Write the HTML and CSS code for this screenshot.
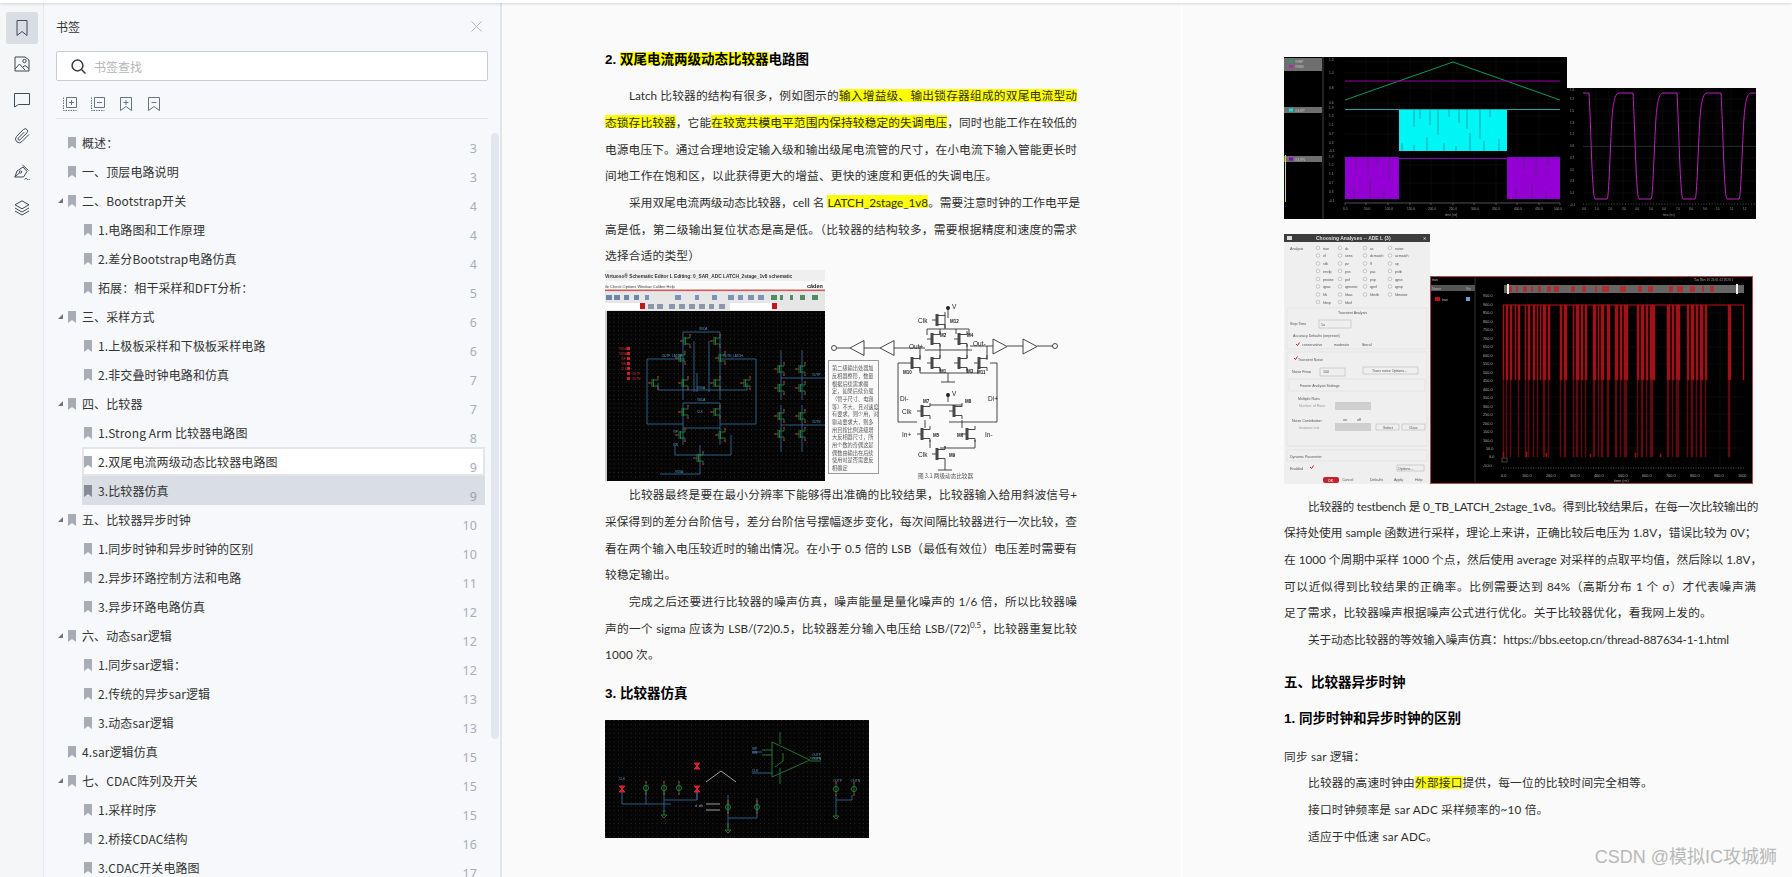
FILE: index.html
```html
<!DOCTYPE html>
<html lang="zh">
<head>
	<meta charset="utf-8">
	<title>书签</title>
	<link rel="stylesheet" href="styles.css">
</head>
<body>
	<svg class="sprite">
		<symbol id="bm" viewBox="0 0 8 12"><path d="M0 0h8v12L4 9 0 12z"/></symbol>
		<g id="mos"><path class="mos-g" d="M-3-4V4M-1.5-4V4M-3 0H-6M-1.5-3H3V-6M-1.5 3H3V6"/><path class="pin" d="M2.3-7h1.4v1.4H2.3zM2.3 5.6h1.4V7H2.3zM-6.7-.7h1.4V.7h-1.4z"/></g>
		<g id="nm"><path class="ink" d="M-8 0H-4M-4-6V6M-2-6V6M-2-4.5H5V-8M-2 4.5H5V8"/><path class="ink-thick" d="M-3-6V6"/></g>
		<g id="src"><circle class="mos-g" r="2.6"/><path class="pin" d="M-.7-7H.7v1.4H-.7zM-.7 5.6H.7V7H-.7z"/><path class="mos-g" d="M0-6V6"/></g>
	</svg>

	<div class="topbar"></div>
	<div class="app">
		<!-- left icon rail -->
		<nav class="rail">
			<a class="rail-btn active"><svg viewBox="0 0 16 16"><path d="M3 .5h10v15L8 11.5 3 15.5z"/></svg></a>
			<a class="rail-btn"><svg viewBox="0 0 16 16"><path d="M1 1h10l4 3v11H1zM1 13l4.500-5 5.500 6M9 11l2-1.500 4 3"/><circle cx="10.500" cy="5" r="1.700"/></svg></a>
			<a class="rail-btn"><svg viewBox="0 0 16 16"><path d="M.5 1.500h15v11H4.500l-4 2.500z"/></svg></a>
			<a class="rail-btn"><svg viewBox="0 0 16 16"><path d="M15 6.500 8 13.500a3.600 3.600 0 0 1-5.500-5l7-7a2.400 2.400 0 0 1 3.400 3.400L6 11.800a1.200 1.200 0 0 1-1.700-1.700l6-6"/></svg></a>
			<a class="rail-btn"><svg viewBox="0 0 16 16"><path d="M3 7l6-4 4 4.500-3.500 5.500H.8zM8.500 1l6 5.500M.8 13 5.500 8.800M10.500 15.500c1-1.500 2-1.500 3 0s1.500.5 2-.5"/><circle cx="6.500" cy="8" r="1.200"/></svg></a>
			<a class="rail-btn"><svg viewBox="0 0 16 16"><path d="M8 .8l7 4-7 4-7-4zM1 8l7 4 7-4M1 11l7 4 7-4"/></svg></a>
		</nav>

		<!-- bookmark panel -->
		<aside class="panel">
			<div class="panel-head">
				<span class="panel-title">书签</span>
				<svg class="close" viewBox="0 0 11 11"><path d="M.5.500l10 10M10.500.500l-10 10"/></svg>
			</div>
			<div class="search">
				<svg class="search-ico" viewBox="0 0 15 15"><circle cx="6.500" cy="6.500" r="5.400"/><path d="M10.500 10.500l4 4"/></svg>
				<span class="search-text">书签查找</span>
			</div>
			<div class="tools">
				<svg class="tool" viewBox="0 0 14 14"><path class="dash" d="M.5.500v13h13"/><path d="M3.500.500h10v10h-10zM8.500 3v5M6 5.500h5"/></svg>
				<svg class="tool" viewBox="0 0 14 14"><path class="dash" d="M.5.500v13h13"/><path d="M3.500.500h10v10h-10zM6 5.500h5"/></svg>
				<svg class="tool" viewBox="0 0 14 14"><path d="M1.500.500h11v13l-5.500-4-5.500 4zM7 3v5M4.500 5.500h5"/></svg>
				<svg class="tool" viewBox="0 0 14 14"><path d="M1.500.500h11v13l-5.500-4-5.500 4zM4.500 5.500h5"/></svg>
			</div>
			<div class="tree">
				<div class="row"><i class="twisty"></i><svg class="bm"><use href="#bm"/></svg><span class="label">概述：</span><span class="pg">3</span></div>
				<div class="row"><i class="twisty"></i><svg class="bm"><use href="#bm"/></svg><span class="label">一、顶层电路说明</span><span class="pg">3</span></div>
				<div class="row"><i class="twisty open"></i><svg class="bm"><use href="#bm"/></svg><span class="label">二、Bootstrap开关</span><span class="pg">4</span></div>
				<div class="row sub"><svg class="bm"><use href="#bm"/></svg><span class="label">1.电路图和工作原理</span><span class="pg">4</span></div>
				<div class="row sub"><svg class="bm"><use href="#bm"/></svg><span class="label">2.差分Bootstrap电路仿真</span><span class="pg">4</span></div>
				<div class="row sub"><svg class="bm"><use href="#bm"/></svg><span class="label">拓展：相干采样和DFT分析：</span><span class="pg">5</span></div>
				<div class="row"><i class="twisty open"></i><svg class="bm"><use href="#bm"/></svg><span class="label">三、采样方式</span><span class="pg">6</span></div>
				<div class="row sub"><svg class="bm"><use href="#bm"/></svg><span class="label">1.上极板采样和下极板采样电路</span><span class="pg">6</span></div>
				<div class="row sub"><svg class="bm"><use href="#bm"/></svg><span class="label">2.非交叠时钟电路和仿真</span><span class="pg">7</span></div>
				<div class="row"><i class="twisty open"></i><svg class="bm"><use href="#bm"/></svg><span class="label">四、比较器</span><span class="pg">7</span></div>
				<div class="row sub"><svg class="bm"><use href="#bm"/></svg><span class="label">1.Strong Arm 比较器电路图</span><span class="pg">8</span></div>
				<div class="row sub hover"><svg class="bm"><use href="#bm"/></svg><span class="label">2.双尾电流两级动态比较器电路图</span><span class="pg">9</span></div>
				<div class="row sub selected"><svg class="bm"><use href="#bm"/></svg><span class="label">3.比较器仿真</span><span class="pg">9</span></div>
				<div class="row"><i class="twisty open"></i><svg class="bm"><use href="#bm"/></svg><span class="label">五、比较器异步时钟</span><span class="pg">10</span></div>
				<div class="row sub"><svg class="bm"><use href="#bm"/></svg><span class="label">1.同步时钟和异步时钟的区别</span><span class="pg">10</span></div>
				<div class="row sub"><svg class="bm"><use href="#bm"/></svg><span class="label">2.异步环路控制方法和电路</span><span class="pg">11</span></div>
				<div class="row sub"><svg class="bm"><use href="#bm"/></svg><span class="label">3.异步环路电路仿真</span><span class="pg">12</span></div>
				<div class="row"><i class="twisty open"></i><svg class="bm"><use href="#bm"/></svg><span class="label">六、动态sar逻辑</span><span class="pg">12</span></div>
				<div class="row sub"><svg class="bm"><use href="#bm"/></svg><span class="label">1.同步sar逻辑：</span><span class="pg">12</span></div>
				<div class="row sub"><svg class="bm"><use href="#bm"/></svg><span class="label">2.传统的异步sar逻辑</span><span class="pg">13</span></div>
				<div class="row sub"><svg class="bm"><use href="#bm"/></svg><span class="label">3.动态sar逻辑</span><span class="pg">13</span></div>
				<div class="row"><i class="twisty"></i><svg class="bm"><use href="#bm"/></svg><span class="label">4.sar逻辑仿真</span><span class="pg">15</span></div>
				<div class="row"><i class="twisty open"></i><svg class="bm"><use href="#bm"/></svg><span class="label">七、CDAC阵列及开关</span><span class="pg">15</span></div>
				<div class="row sub"><svg class="bm"><use href="#bm"/></svg><span class="label">1.采样时序</span><span class="pg">15</span></div>
				<div class="row sub"><svg class="bm"><use href="#bm"/></svg><span class="label">2.桥接CDAC结构</span><span class="pg">16</span></div>
				<div class="row sub"><svg class="bm"><use href="#bm"/></svg><span class="label">3.CDAC开关电路图</span><span class="pg">17</span></div>
				<div class="scrollbar"></div>
			</div>
		</aside>

		<!-- document pages -->
		<main class="reader">
			<section class="page page-left">
				<h2 class="head first"><span class="num">2. </span><mark>双尾电流两级动态比较器</mark>电路图</h2>
				<p class="ln ind">Latch 比较器的结构有很多，例如图示的<mark>输入增益级、输出锁存器组成的双尾电流型动</mark></p>
				<p class="ln"><mark>态锁存比较器</mark>，它能<mark>在较宽共模电平范围内保持较稳定的失调电压</mark>，同时也能工作在较低的</p>
				<p class="ln">电源电压下。通过合理地设定输入级和输出级尾电流管的尺寸，在小电流下输入管能更长时</p>
				<p class="ln end">间地工作在饱和区，以此获得更大的增益、更快的速度和更低的失调电压。</p>
				<p class="ln ind">采用双尾电流两级动态比较器，cell 名 <mark>LATCH_2stage_1v8</mark>。需要注意时钟的工作电平是</p>
				<p class="ln">高是低，第二级输出复位状态是高是低。（比较器的结构较多，需要根据精度和速度的需求</p>
				<p class="ln end">选择合适的类型）</p>

				<div class="fig-row fig-schem">
					<svg class="pic blur" width="220" height="211" viewBox="0 0 220 211">
						<defs>
							<pattern id="dotsA" width="4.300" height="4.300" patternUnits="userSpaceOnUse"><rect width=".7" height=".7" fill="#4a4a4a"/></pattern>
							<pattern id="dotsC" width="4.300" height="4.300" patternUnits="userSpaceOnUse"><rect width=".7" height=".7" fill="#444"/></pattern>
						</defs>
						<rect width="220" height="211" fill="#e6e6e6"/>
						<rect width="220" height="11" fill="#efefef"/>
						<text class="t bold" font-size="4.800" x="0" y="7.500" fill="#333">Virtuoso® Schematic Editor L Editing: 0_SAR_ADC LATCH_2stage_1v8 schematic</text>
						<rect y="11" width="220" height="9" fill="#fafafa"/>
						<text class="t" font-size="4" x="0" y="17.500" fill="#444">ile   Check   Options   Window   Calibre   Help</text>
						<text class="t bold" font-size="5.500" x="202" y="17.500" fill="#222">cāden</text>
						<rect y="19.500" width="220" height="1.600" fill="#cf5a5a"/>
						<path d="M1 25h6v5H1zM9 25h6v5H9zM19 25h5v5h-5zM29 25h5v5h-5z" fill="#6f86a8"/>
						<path d="M40 25h4v5h-4zM70 25h6v5h-6zM90 25h4v5h-4zM107 25h5v5h-5zM123 25h6v5h-6zM133 25h5v5h-5zM143 25h6v5h-6zM153 25h6v5h-6z" fill="#7d93b6"/>
						<path d="M166 25h6v5h-6zM175 25h3v5h-3zM185 25h3v5h-3zM195 25h5v5h-5zM207 25h6v5h-6z" fill="#4b8f62"/>
						<rect y="33" width="36" height="7" fill="#fff"/>
						<rect x="125" y="33" width="42" height="7" fill="#fff"/>
						<path d="M35 33h5v6h-5zM167 33h5v6h-5z" fill="#c4161c"/>
						<path d="M43 34h6v5h-6zM52 34h6v5h-6zM64 34h6v5h-6zM74 34h6v5h-6zM84 34h6v5h-6zM94 34h6v5h-6zM104 34h5v5h-5zM114 34h6v5h-6z" fill="#8a96aa"/>
						<rect y="41" width="220" height="170" fill="#050505"/>
						<rect y="41" width="2" height="170" fill="#cfcfcf"/>
						<rect x="3" y="42" width="217" height="169" fill="url(#dotsA)"/>
						<g class="wire">
							<path d="M78 62H115M78 62V130M115 62V130M42 89H80M115 89H151M42 89V154H78M151 89V154H115M53 120H142M53 113V120M142 113V120M78 133H115M78 133V175M115 133V175M78 158H115M92 103V122M89 71V122M104 71V122M70 175V185H126V165M95 175V204H55"/>
							<path d="M176 80V130M197 80V130M176 135V182M197 135V182M176 108H197M176 155H197M197 108H220M197 155H220"/>
						</g>
						<g>
							<use href="#mos" x="82" y="71"/><use href="#mos" x="112" y="71"/><use href="#mos" x="77" y="88"/><use href="#mos" x="117" y="88"/>
							<use href="#mos" x="50" y="113"/><use href="#mos" x="80" y="113"/><use href="#mos" x="112" y="113"/><use href="#mos" x="142" y="113"/>
							<use href="#mos" x="80" y="142"/><use href="#mos" x="112" y="142"/><use href="#mos" x="77" y="165"/><use href="#mos" x="117" y="165"/>
							<use href="#mos" x="95" y="188"/><use href="#mos" x="176" y="99"/><use href="#mos" x="197" y="99"/><use href="#mos" x="176" y="118"/>
							<use href="#mos" x="197" y="118"/><use href="#mos" x="176" y="146"/><use href="#mos" x="197" y="146"/><use href="#mos" x="176" y="164"/><use href="#mos" x="197" y="164"/>
						</g>
						<path class="pin" d="M22 77h3v3h-3zM22 82h3v3h-3zM22 87h3v3h-3zM22 92h3v3h-3zM22 97h3v3h-3zM22 102h3v3h-3zM22 107h3v3h-3z"/>
						<g class="t" font-size="3" fill="#c33">
							<text x="14" y="79.500">VDDA</text><text x="14" y="84.500">VSSA</text><text x="16" y="89.500">VIP</text><text x="16" y="94.500">VIN</text><text x="16" y="99.500">CLK</text><text x="27" y="104.500">OUTP</text><text x="27" y="109.500">OUTN</text>
						</g>
						<g class="t" font-size="3" fill="#5b9ac8">
							<text x="94" y="60">VDDA</text><text x="57" y="87">OUTP_LATCH</text><text x="118" y="87">OUTN_LATCH</text><text x="92" y="119">VSSA</text><text x="92" y="131">VDDA</text><text x="92" y="143">CLK</text><text x="68" y="163">VIP</text><text x="68" y="176">VIN</text><text x="70" y="203">VSSA</text><text x="207" y="106">OUTP</text><text x="207" y="153">OUTN</text>
						</g>
					</svg>
					<svg class="pic blur" width="260" height="211" viewBox="0 0 260 211">
						<g class="ink">
							<circle cx="9" cy="78" r="2.500"/>
							<path d="M12 78H25M39 78H55M69 78H100M145 76H168M182 76H198M212 76H228"/>
							<path d="M25 78l14-7.500v15zM55 78l14-7.500v15zM168 69v15l14-7.500zM198 69v15l14-7.500z"/>
							<circle cx="230" cy="76" r="2.500"/>
							<path d="M123 38V48M120 45V56M120 56V59M102 59H144M102 59V65M144 59V65M115 64V59M131 59V64M115 74V88M142 74V88M100 80H147M115 98V103M142 98V103M95 97V103H153V97M95 90V76M162 90V76M123 103V112M116 112H130"/>
							<path d="M73 93H82M73 93V152H92M172 93H165M172 93V152H124M100 150V158M137 150V158M105 135H137M123 132V128M105 170V178M150 170V178H115M120 178V176M120 192V200M113 200H127M123 128V125"/>
						</g>
						<circle cx="123" cy="38" r="2" fill="#222"/><circle cx="123" cy="125" r="2" fill="#222"/>
						<g><use href="#nm" x="115" y="50"/><use href="#nm" x="110" y="69"/><use href="#nm" x="137" y="69"/><use href="#nm" x="110" y="93"/><use href="#nm" x="137" y="93"/><use href="#nm" x="90" y="93"/><use href="#nm" x="157" y="93"/><use href="#nm" x="100" y="141"/><use href="#nm" x="132" y="141"/><use href="#nm" x="100" y="164"/><use href="#nm" x="145" y="164"/><use href="#nm" x="115" y="184"/></g>
						<g class="t" font-size="6.500" fill="#222">
							<text x="93" y="53">Clk</text><text x="84" y="79">Out+</text><text x="148" y="76">Out-</text><text x="75" y="131">Di-</text><text x="163" y="131">Di+</text><text x="77" y="144">Clk</text><text x="77" y="167">In+</text><text x="160" y="167">In-</text><text x="93" y="187">Clk</text><text x="127" y="39">V</text><text x="127" y="126">V</text>
						</g>
						<g class="t bold" font-size="4.500" fill="#222">
							<text x="125" y="53">M12</text><text x="115" y="67">M2</text><text x="142" y="67">M4</text><text x="115" y="103">M1</text><text x="142" y="103">M3</text><text x="78" y="104">M10</text><text x="152" y="104">M11</text><text x="98" y="133">M7</text><text x="140" y="133">M8</text><text x="108" y="167">M5</text><text x="132" y="167">M6</text><text x="124" y="187">M9</text>
						</g>
						<rect class="note-box" x="3.500" y="90.500" width="50" height="113"/>
						<g class="note">
							<text x="7" y="100">第二级输出处器加</text><text x="7" y="108">反相器整形，数量</text><text x="7" y="116">根据后续需求确</text><text x="7" y="123">定，如果后续负载</text><text x="7" y="131">（管子尺寸、电容</text><text x="7" y="139">等）不大，且对速度</text><text x="7" y="146">有要求，则少用，对</text><text x="7" y="154">驱动要求大，则多</text><text x="7" y="162">用且按比例递级增</text><text x="7" y="169">大反相器尺寸，所</text><text x="7" y="177">用个数的奇偶这是</text><text x="7" y="185">偶数由输出在后续</text><text x="7" y="192">使用时是否需要反</text><text x="7" y="200">相确定</text>
						</g>
						<text class="note cap" x="93" y="208">图 3.1 两级动态比较器</text>
					</svg>
				</div>

				<p class="ln ind">比较器最终是要在最小分辨率下能够得出准确的比较结果，比较器输入给用斜波信号+</p>
				<p class="ln">采保得到的差分台阶信号，差分台阶信号摆幅逐步变化，每次间隔比较器进行一次比较，查</p>
				<p class="ln">看在两个输入电压较近时的输出情况。在小于 0.5 倍的 LSB（最低有效位）电压差时需要有</p>
				<p class="ln end">较稳定输出。</p>
				<p class="ln ind">完成之后还要进行比较器的噪声仿真，噪声能量是量化噪声的 1/6 倍，所以比较器噪</p>
				<p class="ln">声的一个 sigma 应该为 LSB/(72)0.5，比较器差分输入电压给 LSB/(72)<sup>0.5</sup>，比较器重复比较</p>
				<p class="ln end">1000 次。</p>
				<h2 class="head h-fig"><span class="num">3. </span>比较器仿真</h2>

				<svg class="pic blur" width="264" height="118" viewBox="0 0 264 118">
					<rect width="264" height="118" fill="#050505"/>
					<rect width="264" height="118" fill="url(#dotsC)"/>
					<g class="wire">
						<path d="M17 69V84H66M41 71V84M59 71V80H92V71M59 80V84M92 80V71M123 75V98H152V78M247 75V80H231M231 75V92M59 84V92M123 98V108"/>
						<path d="M147 32H157M147 53H167"/>
					</g>
					<path class="mos-g" d="M167 22 205 40 167 57zM157 30H167M157 35H167M205 38H216M205 41H216M170 47l8-6V33M175 12V24M175 48V64M59 90V95M123 103V110M231 92V96M56 95h6l-3 3zM120 110h6l-3 3zM228 96h6l-3 3z"/>
					<path class="ink-w" d="M101 62 116 51 131 62"/>
					<path class="ink-w" d="M101 84H115M101 90H115"/>
					<g><use href="#src" x="41" y="68"/><use href="#src" x="59" y="68"/><use href="#src" x="74" y="68"/><use href="#src" x="123" y="87"/><use href="#src" x="152" y="87"/><use href="#src" x="231" y="69"/><use href="#src" x="249" y="69"/></g>
					<path d="M14 66h6l-6 6h6zM89 43h6l-6 6h6zM89 66h6l-6 6h6z" fill="#d6202a" stroke="#d6202a" stroke-width="1"/>
					<g class="t" font-size="3.200" fill="#5b9ac8"><text x="147" y="30">VIP</text><text x="147" y="34">VIN</text><text x="147" y="52">CLK</text><text x="207" y="36">OUTP</text><text x="207" y="40">OUTN</text><text x="14" y="60">CLK</text><text x="228" y="62">OUTP</text><text x="246" y="62">OUTN</text></g>
					<text class="t" font-size="3" x="90" y="87" fill="#bbb">sl_vth</text>
				</svg>
			</section>

			<section class="page page-right">
				<div class="fig-row">
					<svg class="pic blur" width="283" height="162" viewBox="0 0 283 162">
						<rect width="283" height="162" fill="#000"/>
						<path d="M39 0V162" stroke="#444"/>
						<path d="M0 1h38v13H0zM0 50h38v6H0zM0 99h38v6H0z" fill="#6e6e6e"/>
						<path d="M5 3h4v3H5z" fill="#1fa463"/><path d="M5 8h4v3H5z" fill="#c020c0"/><path d="M5 51.500h4v3H5z" fill="#00e5e5"/><path d="M5 100.500h4v3H5z" fill="#8a00d0"/>
						<g class="t" font-size="3.200" fill="#c9c9c9"><text x="11" y="5.500">/VINP</text><text x="11" y="10.500">/VINN</text><text x="11" y="54.500">/OUTP</text><text x="11" y="103.500">/OUTN</text></g>
						<rect x="1" y="98" width="1" height="47" fill="#d8d820"/>
						<path class="grid" d="M61 5H276M61 16H276M61 31H276M61 46H276M61 59H276M61 77H276M61 108H276M61 126H276M82 0V146M104 0V146M126 0V146M147 0V146M169 0V146M190 0V146M212 0V146M233 0V146M255 0V146"/>
						<path d="M61 43 169 5 276 43" fill="none" stroke="#0b9b61" stroke-width="1"/>
						<path d="M61 24H276" stroke="#a000a0" stroke-width="1"/>
						<rect x="115" y="52" width="108" height="42" fill="#00f5f5"/>
						<path d="M61 52.500H276" stroke="#14a8a8"/>
						<path d="M130 52V70M136 52V62M146 52V68M154 52V78M165 52V60M175 52V66M183 52V72M196 52V82M206 52V60M118 94V86M130 94V88M143 94V80M160 94V86M172 94V89M186 94V76M200 94V84M215 94V82" stroke="#22888c" stroke-width=".7"/>
						<path d="M61 100h54v42H61zM223 100h53v42h-53z" fill="#9400d3"/>
						<path d="M61 101.500H276" stroke="#8400c0" stroke-width="1"/>
						<path d="M72 100V112M84 100V116M93 100V108M105 100V122M240 100V112M252 100V118M264 100V108M70 142V130M86 142V122M100 142V132M232 142V132M248 142V128M262 142V134" stroke="#4a2a70" stroke-width=".7"/>
						<path d="M61 146H276M61 146v2M82 146v2M104 146v2M126 146v2M147 146v2M169 146v2M190 146v2M212 146v2M233 146v2M255 146v2M276 146v2" stroke="#888" stroke-width=".6"/>
						<g class="t" font-size="3.200" fill="#9a9a9a">
							<text x="45" y="3.500">1.3</text><text x="45" y="17">1.0</text><text x="45" y="32">0.8</text><text x="45" y="47">0.6</text>
							<text x="45" y="52">1.9</text><text x="45" y="60">1.5</text><text x="45" y="69">1.1</text><text x="45" y="78">0.7</text><text x="45" y="87">0.3</text><text x="45" y="95">-0.1</text>
							<text x="45" y="101">1.9</text><text x="45" y="109">1.5</text><text x="45" y="118">1.1</text><text x="45" y="127">0.7</text><text x="45" y="136">0.3</text><text x="45" y="145">-0.1</text>
							<text x="59" y="153">0.0</text><text x="80" y="153">50.0</text><text x="101" y="153">100.0</text><text x="123" y="153">150.0</text><text x="144" y="153">200.0</text><text x="165" y="153">250.0</text><text x="187" y="153">300.0</text><text x="208" y="153">350.0</text><text x="230" y="153">400.0</text><text x="251" y="153">450.0</text><text x="270" y="153">500.0</text>
							<text x="161" y="159">time (ns)</text>
						</g>
					</svg>
					<svg class="pic blur lower" width="189" height="131" viewBox="0 0 189 131">
						<rect width="189" height="131" fill="#000"/>
						<path class="grid" d="M16 11H189M16 23H189M16 35H189M16 46H189M16 58H189M16 70H189M16 82H189M16 93H189M16 105H189M29 0V116M42 0V116M56 0V116M69 0V116M83 0V116M96 0V116M110 0V116M123 0V116M137 0V116M150 0V116M164 0V116"/>
						<path d="M16 58.500H189" stroke="#1f3d2a" stroke-width=".7"/>
						<path d="M16 5H22C24 40 25 108 28 111H40C42 111 43 60 45 30C46 15 48 5 52 5H66C68 40 69 108 72 111H84C86 111 87 60 89 30C90 15 92 5 96 5H110C112 40 113 108 116 111H128C130 111 131 60 133 30C134 15 136 5 140 5H154C156 40 157 108 160 111H172C174 111 175 60 177 30C178 15 180 5 184 5H189" fill="none" stroke="#c020c0" stroke-width="1"/>
						<path d="M16 116H189" stroke="#888" stroke-width=".6" stroke-dasharray="1 1.800"/>
						<g class="t" font-size="3" fill="#9a9a9a">
							<text x="3" y="3">1.9</text><text x="3" y="12">1.7</text><text x="3" y="24">1.5</text><text x="3" y="36">1.3</text><text x="3" y="47">1.1</text><text x="3" y="59">0.9</text><text x="3" y="71">0.7</text><text x="3" y="83">0.5</text><text x="3" y="94">0.3</text><text x="3" y="106">0.1</text><text x="3" y="118">-0.1</text>
							<text x="15" y="122">0.6</text><text x="28" y="122">1.0</text><text x="41" y="122">2.0</text><text x="55" y="122">3.0</text><text x="68" y="122">4.0</text><text x="82" y="122">5.0</text><text x="95" y="122">6.0</text><text x="109" y="122">7.0</text><text x="122" y="122">8.0</text><text x="136" y="122">9.0</text><text x="149" y="122">10</text><text x="163" y="122">11</text><text x="176" y="122">12</text>
							<text x="96" y="128">time (ns)</text>
						</g>
					</svg>
				</div>

				<div class="fig-row gap-top">
					<svg class="pic blur" width="146" height="250" viewBox="0 0 146 250">
						<rect width="146" height="250" fill="#efefef"/>
						<rect width="146" height="8" fill="#3c3c3c"/>
						<rect x="3" y="2" width="5" height="4" fill="#ddd"/>
						<text class="t bold" font-size="5" x="32" y="5.800" fill="#ddd">Choosing Analyses -- ADE L (3)</text>
						<text class="t bold" font-size="4" x="139" y="5.800" fill="#ddd">✕</text>
						<g class="radios">
							<circle cx="34" cy="14" r="1.800" fill="#c0232b"/>
							<circle cx="34" cy="21.500" r="1.800"/><circle cx="34" cy="29.500" r="1.800"/><circle cx="34" cy="37" r="1.800"/><circle cx="34" cy="45" r="1.800"/><circle cx="34" cy="52.500" r="1.800"/><circle cx="34" cy="60.500" r="1.800"/><circle cx="34" cy="68" r="1.800"/>
							<circle cx="56" cy="14" r="1.800"/><circle cx="56" cy="21.500" r="1.800"/><circle cx="56" cy="29.500" r="1.800"/><circle cx="56" cy="37" r="1.800"/><circle cx="56" cy="45" r="1.800"/><circle cx="56" cy="52.500" r="1.800"/><circle cx="56" cy="60.500" r="1.800"/><circle cx="56" cy="68" r="1.800"/>
							<circle cx="81" cy="14" r="1.800"/><circle cx="81" cy="21.500" r="1.800"/><circle cx="81" cy="29.500" r="1.800"/><circle cx="81" cy="37" r="1.800"/><circle cx="81" cy="45" r="1.800"/><circle cx="81" cy="52.500" r="1.800"/><circle cx="81" cy="60.500" r="1.800"/>
							<circle cx="106" cy="14" r="1.800"/><circle cx="106" cy="21.500" r="1.800"/><circle cx="106" cy="29.500" r="1.800"/><circle cx="106" cy="37" r="1.800"/><circle cx="106" cy="45" r="1.800"/><circle cx="106" cy="52.500" r="1.800"/><circle cx="106" cy="60.500" r="1.800"/>
						</g>
						<g class="dlg">
							<text x="6" y="15.500">Analysis</text>
							<text x="39" y="15.500">tran</text><text x="39" y="23">xf</text><text x="39" y="31">stb</text><text x="39" y="38.500">envlp</text><text x="39" y="46.500">pnoise</text><text x="39" y="54">qpac</text><text x="39" y="62">hb</text><text x="39" y="69.500">hbsp</text>
							<text x="61" y="15.500">dc</text><text x="61" y="23">sens</text><text x="61" y="31">pz</text><text x="61" y="38.500">pss</text><text x="61" y="46.500">pxf</text><text x="61" y="54">qpnoise</text><text x="61" y="62">hbac</text><text x="61" y="69.500">hbxf</text>
							<text x="86" y="15.500">ac</text><text x="86" y="23">dcmatch</text><text x="86" y="31">lf</text><text x="86" y="38.500">pac</text><text x="86" y="46.500">psp</text><text x="86" y="54">qpxf</text><text x="86" y="62">hbstb</text>
							<text x="111" y="15.500">noise</text><text x="111" y="23">acmatch</text><text x="111" y="31">sp</text><text x="111" y="38.500">pstb</text><text x="111" y="46.500">qpss</text><text x="111" y="54">qpsp</text><text x="111" y="62">hbnoise</text>
							<text x="54" y="80">Transient Analysis</text>
							<text x="6" y="91">Stop Time</text><text x="37" y="91.500">1u</text>
							<text x="9" y="103">Accuracy Defaults (errpreset)</text>
							<text x="18" y="112">conservative</text><text x="50" y="112">moderate</text><text x="78" y="112">liberal</text>
							<text x="14" y="127">Transient Noise</text>
							<text x="8" y="139">Noise Fmax</text><text x="39" y="139">100</text>
							<text x="88" y="138">Trans noise Options...</text>
							<text x="16" y="152.500">Fourier Analysis Settings</text>
							<text x="14" y="166">Multiple Runs</text>
							<text x="15" y="172.500" fill="#999">Number of Runs</text>
							<text x="8" y="188">Noise Contribution</text><text x="59" y="187">on</text><text x="73" y="187">off</text>
							<text x="15" y="194.500" fill="#999">Instance List</text>
							<text x="99" y="194.500">Select</text><text x="125" y="194.500">Clear</text>
							<text x="6" y="224">Dynamic Parameter</text>
							<text x="6" y="236">Enabled</text>
							<text x="114" y="235.500">Options...</text>
							<text x="58" y="247">Cancel</text><text x="86" y="247">Defaults</text><text x="110" y="247">Apply</text><text x="131" y="247">Help</text>
						</g>
						<path class="box" d="M3 74H143V115H3zM3 118H143V212H3zM5 145H141V157H5zM3 216H143V227H3z"/>
						<rect class="field" x="35" y="86" width="32" height="8"/>
						<rect class="field" x="36" y="134" width="25" height="8"/>
						<rect class="field" x="79" y="133" width="55" height="7"/>
						<rect class="field off" x="51" y="168" width="36" height="8"/>
						<rect class="field off" x="51" y="189" width="36" height="8"/>
						<rect class="field" x="92" y="190" width="23" height="6"/><rect class="field" x="118" y="190" width="23" height="6"/>
						<rect class="field" x="113" y="231" width="27" height="6"/>
						<path d="M12 110l1.500 1.500 2-3M10 124l1.500 1.500 2-3M26 233l1.500 1.500 2-3" fill="none" stroke="#c0232b" stroke-width="1"/>
						<rect x="39" y="243" width="16" height="6" rx="2" fill="#c0232b"/>
						<text class="t bold" font-size="3.400" x="44" y="247.500" fill="#f5d0d0">OK</text>
					</svg>
					<svg class="pic blur raised" width="323" height="208" viewBox="0 0 323 208">
						<rect x=".5" y=".5" width="322" height="207" fill="#000" stroke="#a94b50"/>
						<path d="M45 1V207" stroke="#333"/>
						<rect x="1" y="9" width="44" height="6" fill="#555"/>
						<g class="t" font-size="3.400" fill="#bbb"><text x="2" y="5">tran</text><text x="2" y="13.500">Name</text><text x="36" y="13.500">Vis</text><text x="12" y="25">tran</text><text x="264" y="5" class="serif">Tue Nov 10 23:01:12 2020  1</text></g>
						<rect x="5" y="21" width="5" height="4" fill="#c01018"/>
						<path d="M36 21h4v4h-4z" fill="#6f9ed0"/>
						<rect x="74" y="9" width="240" height="8" fill="#666"/>
						<path d="M79 10h3v6h-3zM86 10h2v6h-2zM93 10h4v6h-4zM101 10h2v6h-2zM108 10h3v6h-3zM117 10h4v6h-4zM124 10h5v6h-5zM141 10h4v6h-4zM152 10h4v6h-4zM165 10h2v6h-2zM172 10h7v6h-7zM190 10h6v6h-6zM208 10h4v6h-4zM218 10h5v6h-5zM239 10h4v6h-4zM247 10h6v6h-6zM260 10h5v6h-5zM272 10h2v6h-2zM280 10h4v6h-4z" fill="#b03030"/>
						<path d="M77 8h2v10h-2zM306 8h2v10h-2z" fill="#f0f0f0"/>
						<path class="grid" d="M73 37H314M73 54H314M73 71H314M73 88H314M73 121H314M73 138H314M73 155H314M73 172H314M97 20V195M121 20V195M145 20V195M169 20V195M193 20V195M217 20V195M241 20V195M266 20V195M290 20V195"/>
						<path d="M73 29H314" stroke="#c01018" stroke-width="1"/>
						<path class="bars-hi" d="M73 29h1v75h-1zM76 29h2v75h-2zM80 29h2v75h-2zM85 29h1v75h-1zM88 29h2v75h-2zM95 29h1v75h-1zM98 29h2v75h-2zM103 29h2v75h-2zM107 29h1v75h-1zM110 29h1v75h-1zM113 29h3v75h-3zM118 29h2v75h-2zM130 29h2v75h-2zM134 29h3v75h-3zM143 29h1v75h-1zM146 29h3v75h-3zM151 29h2v75h-2zM155 29h2v75h-2zM163 29h3v75h-3zM168 29h1v75h-1zM171 29h3v75h-3zM177 29h3v75h-3zM185 29h3v75h-3zM190 29h2v75h-2zM194 29h4v75h-4zM207 29h2v75h-2zM211 29h3v75h-3zM216 29h2v75h-2zM220 29h5v75h-5zM237 29h3v75h-3zM242 29h2v75h-2zM246 29h4v75h-4zM257 29h2v75h-2zM261 29h3v75h-3zM266 29h2v75h-2zM270 29h3v75h-3zM275 29h2v75h-2zM298 29h3v75h-3zM313 29h1v75h-1z"/>
						<path class="bars-lo" d="M73 104h1v77h-1zM76 104h1v77h-1zM80 104h1v77h-1zM88 104h1v77h-1zM95 104h1v77h-1zM98 104h1v77h-1zM103 104h1v77h-1zM107 104h1v77h-1zM113 104h2v77h-2zM118 104h1v77h-1zM130 104h1v77h-1zM134 104h2v77h-2zM143 104h1v77h-1zM146 104h2v77h-2zM151 104h1v77h-1zM155 104h1v77h-1zM163 104h2v77h-2zM168 104h1v77h-1zM171 104h2v77h-2zM177 104h2v77h-2zM185 104h2v77h-2zM190 104h1v77h-1zM194 104h3v77h-3zM207 104h1v77h-1zM211 104h2v77h-2zM216 104h1v77h-1zM220 104h3v77h-3zM237 104h2v77h-2zM242 104h1v77h-1zM246 104h3v77h-3zM257 104h1v77h-1zM261 104h2v77h-2zM266 104h1v77h-1zM270 104h2v77h-2zM275 104h1v77h-1zM298 104h2v77h-2z"/>
						<path class="bars-hi" d="M73 181h1V176h-1zM96 181h1v-5h-1zM116 181h1v-4h-1zM160 181h1v-3h-1zM205 181h1v-4h-1zM230 181h1v-3h-1z"/>
						<path d="M73 192H314" stroke="#999" stroke-width=".6" stroke-dasharray="1 1.500"/>
						<rect x="72" y="182" width="5" height="4" fill="none" stroke="#888" stroke-width=".5"/>
						<g class="t" font-size="3.800" fill="#aaa">
							<text x="53" y="21">950.0</text><text x="53" y="30">900.0</text><text x="53" y="38">850.0</text><text x="53" y="47">800.0</text><text x="53" y="55">750.0</text><text x="53" y="64">700.0</text><text x="53" y="72">650.0</text><text x="53" y="81">600.0</text><text x="53" y="89">550.0</text><text x="53" y="98">500.0</text><text x="53" y="106">450.0</text><text x="53" y="115">400.0</text><text x="53" y="123">350.0</text><text x="53" y="132">300.0</text><text x="53" y="140">250.0</text><text x="53" y="149">200.0</text><text x="53" y="157">150.0</text><text x="53" y="166">100.0</text><text x="56" y="174">50.0</text><text x="59" y="182">0.0</text><text x="53" y="191">-50.0</text>
							<text x="71" y="201">0.0</text><text x="92" y="201">100.0</text><text x="116" y="201">200.0</text><text x="140" y="201">300.0</text><text x="164" y="201">400.0</text><text x="188" y="201">500.0</text><text x="212" y="201">600.0</text><text x="236" y="201">700.0</text><text x="260" y="201">800.0</text><text x="284" y="201">900.0</text><text x="308" y="201">1000</text>
							<text x="184" y="206">time (ns)</text>
						</g>
					</svg>
				</div>

				<p class="ln ind after-fig tight">比较器的 testbench 是 0_TB_LATCH_2stage_1v8。得到比较结果后，在每一次比较输出的</p>
				<p class="ln">保持处使用 sample 函数进行采样，理论上来讲，正确比较后电压为 1.8V，错误比较为 0V；</p>
				<p class="ln wide">在 1000 个周期中采样 1000 个点，然后使用 average 对采样的点取平均值，然后除以 1.8V，</p>
				<p class="ln">可以近似得到比较结果的正确率。比例需要达到 84%（高斯分布 1 个 σ）才代表噪声满</p>
				<p class="ln end">足了需求，比较器噪声根据噪声公式进行优化。关于比较器优化，看我网上发的。</p>
				<p class="ln ind end tight">关于动态比较器的等效输入噪声仿真：https://bbs.eetop.cn/thread-887634-1-1.html</p>
				<h2 class="head h-five">五、比较器异步时钟</h2>
				<h2 class="head h-one"><span class="num">1. </span>同步时钟和异步时钟的区别</h2>
				<p class="ln end">同步 sar 逻辑：</p>
				<p class="ln ind end">比较器的高速时钟由<mark>外部接口</mark>提供，每一位的比较时间完全相等。</p>
				<p class="ln ind end">接口时钟频率是 sar ADC 采样频率的~10 倍。</p>
				<p class="ln ind end">适应于中低速 sar ADC。</p>
			</section>
		</main>
	</div>
	<div class="watermark">CSDN @模拟IC攻城狮</div>
</body>
</html>
```

FILE: styles.css
```css
* {
	box-sizing: border-box;
}

html, body {
	margin: 0;
	height: 100%;
	overflow: hidden;
	background-color: #ffffff;
}

body {
	font-family: "Noto Sans CJK SC", "Noto Sans", sans-serif;
	color: #333333;
}

.sprite {
	display: none;
}

.topbar {
	height: 3px;
	background-color: #ffffff;
	box-shadow: 0 1px 3px rgba(0, 0, 0, 0.14);
	position: relative;
	z-index: 2;
}

.app {
	display: flex;
	height: 874px;
}

/* left icon rail */
.rail {
	width: 44px;
	padding: 9px 6px 0;
	background-color: #f5f6f8;
	border-right: 1px solid #e6e8ed;
}

.rail-btn {
	display: flex;
	align-items: center;
	justify-content: center;
	width: 32px;
	height: 32px;
	margin-bottom: 4px;
	border-radius: 2px;
}

.rail-btn svg {
	width: 16px;
	height: 16px;
	fill: none;
	stroke: #3f4957;
	stroke-width: 1;
}

.rail-btn.active {
	background-color: #dadde4;
}

/* bookmark panel */
.panel {
	width: 458px;
	padding-left: 12px;
	background-color: #f6f8fb;
	border-right: 2px solid #e2e4ea;
	overflow: hidden;
	display: flex;
	flex-direction: column;
}

.panel-head {
	display: flex;
	align-items: center;
	justify-content: space-between;
	height: 46px;
	margin-bottom: 2px;
	padding-right: 18px;
}

.panel-title {
	font-size: 12px;
}

.close {
	width: 11px;
	height: 11px;
	fill: none;
	stroke: #b2b5bd;
}

.search {
	display: flex;
	align-items: center;
	width: 432px;
	height: 30px;
	padding-left: 14px;
	background-color: #ffffff;
	border: 1px solid #c9ccd2;
	border-radius: 2px;
}

.search-ico {
	width: 15px;
	height: 15px;
	margin-right: 8px;
	fill: none;
	stroke: #333b46;
	stroke-width: 1.5;
}

.search-text {
	font-size: 12px;
	color: #b3b5b9;
}

.tools {
	display: flex;
	align-items: center;
	gap: 14px;
	width: 432px;
	height: 38px;
	padding: 8px 0 0 7px;
	border-bottom: 1px solid #e2e4ea;
}

.tool {
	width: 14px;
	height: 14px;
	fill: none;
	stroke: #6b7380;
	stroke-width: 1;
}

.dash {
	stroke-dasharray: 1.5 1;
}

.tree {
	position: relative;
	flex: 1;
	padding-top: 9px;
	overflow: hidden;
}

.row {
	display: flex;
	align-items: center;
	height: 29px;
	width: 427px;
	margin-left: 2px;
	padding-right: 8px;
	font-size: 12px;
	letter-spacing: 0.1px;
}

.row.sub {
	width: 403px;
	margin-left: 26px;
	padding-left: 2px;
}

.twisty {
	width: 5px;
	height: 5px;
	margin-right: 5px;
}

.twisty.open {
	background-color: #6d7480;
	clip-path: polygon(100% 0, 100% 100%, 0 100%);
}

.bm {
	width: 8px;
	height: 12px;
	margin-right: 6px;
	flex-shrink: 0;
	fill: #a8acb5;
}

.label {
	flex: 1;
	white-space: nowrap;
}

.pg {
	padding-top: 12px;
	color: #a9adba;
	font-family: "Noto Sans", sans-serif;
	font-size: 12.500px;
}

.row.hover {
	background-color: #ffffff;
	box-shadow: inset 0 0 0 2px #e3e5ea;
}

.row.selected {
	background-color: #d9dde4;
}

.row.selected .bm {
	fill: #878b95;
}

.row.selected .pg {
	color: #9ca0ad;
}

.scrollbar {
	position: absolute;
	top: 14px;
	right: 1px;
	width: 8px;
	height: 606px;
	background-color: #e3e6ec;
	border-radius: 4px;
}

/* document pages */
.reader {
	flex: 1;
	display: flex;
	gap: 1px;
	background-color: #ffffff;
	overflow: hidden;
}

.page {
	background-color: #fafafa;
	font-family: Lato, "Noto Sans CJK SC", sans-serif;
	font-size: 11.700px;
	color: #2e2e2e;
}

.page-left {
	width: 679px;
	padding: 42px 0 0 103px;
}

.page-right {
	flex: 1;
	padding: 54px 0 0 102px;
}

.ln {
	width: 472px;
	margin: 0;
	line-height: 26.67px;
	white-space: nowrap;
	text-align: justify;
	text-align-last: justify;
	text-justify: inter-character;
}

.ln.end {
	text-align-last: left;
	letter-spacing: 0.200px;
}

.ln.wide {
	width: 478px;
}

.ln.tight {
	letter-spacing: -0.200px;
}

.ind {
	padding-left: 24px;
}

.fig-schem {
	margin-top: 1.500px;
}

.after-fig {
	margin-top: 8.700px;
}

mark {
	color: inherit;
	background: linear-gradient(#ffff00, #ffff00) center / 100% 13px no-repeat;
}

sup {
	font-size: 8px;
	line-height: 0;
}

.head {
	margin: 0;
	font-family: "Noto Sans CJK SC", sans-serif;
	font-size: 13.500px;
	font-weight: 700;
	line-height: 26px;
	color: #000000;
}

.head .num {
	font-family: "Liberation Sans", sans-serif;
}

.head.first {
	margin-bottom: 9.200px;
}

.head.h-fig {
	margin: 10.700px 0 13px;
}

.head.h-five {
	margin-top: 15.300px;
}

.head.h-one {
	margin: 10px 0 10.700px;
}

.fig-row {
	display: flex;
	align-items: flex-start;
}

.gap-top {
	margin-top: 15px;
}

.pic {
	display: block;
	flex-shrink: 0;
}

.blur {
	filter: blur(0.35px);
}

.lower {
	margin-top: 31px;
}

.raised {
	margin-top: 42px;
}

/* picture details */
.t {
	font-family: "Liberation Sans", sans-serif;
}

.bold {
	font-weight: 700;
}

.serif {
	font-family: "Liberation Serif", serif;
}

.wire {
	fill: none;
	stroke: #3174a8;
	stroke-width: 0.8;
}

.mos-g {
	fill: none;
	stroke: #2f8a3f;
	stroke-width: 0.8;
}

.pin {
	fill: #d41e26;
	stroke: none;
}

.ink {
	fill: none;
	stroke: #333333;
	stroke-width: 0.9;
}

.ink-thick {
	fill: none;
	stroke: #333333;
	stroke-width: 1.6;
}

.ink-w {
	fill: none;
	stroke: #c8c8c8;
	stroke-width: 0.8;
}

.note-box {
	fill: none;
	stroke: #999999;
}

.note {
	font-family: "Noto Sans CJK SC", sans-serif;
	font-size: 5.200px;
	fill: #555555;
}

.cap {
	font-size: 5.600px;
}

.grid {
	fill: none;
	stroke: #1c1c1c;
	stroke-width: 0.4;
}

.radios circle {
	fill: #f5f5f5;
	stroke: #9a9a9a;
	stroke-width: 0.5;
}

.dlg {
	font-family: "Liberation Sans", sans-serif;
	font-size: 3.600px;
	fill: #555555;
}

.box {
	fill: none;
	stroke: #dcdcdc;
	stroke-width: 0.6;
}

.field {
	fill: none;
	stroke: #aaaaaa;
	stroke-width: 0.5;
}

.field.off {
	fill: #cfcfcf;
	stroke: none;
}

.bars-hi {
	fill: #a01218;
	stroke: #a01218;
	stroke-width: 0.5;
}

.bars-lo {
	fill: #5c0c10;
	stroke: #5c0c10;
	stroke-width: 0.5;
}

.watermark {
	position: absolute;
	right: 15px;
	bottom: 8px;
	font-family: "Liberation Sans", "Noto Sans CJK SC", sans-serif;
	font-size: 18px;
	line-height: 24px;
	color: #b8b8b8;
}
```
